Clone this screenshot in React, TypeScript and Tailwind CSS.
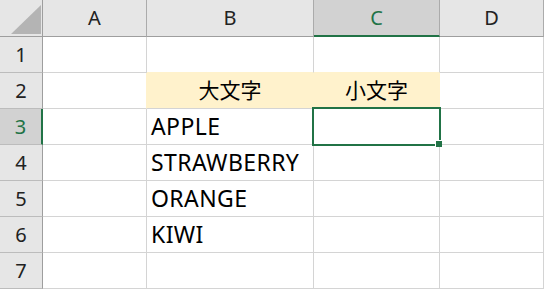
import React from 'react';

const cols = ['A', 'B', 'C', 'D'];

const values: Record<string, string> = {
  B2: '大文字',
  C2: '小文字',
  B3: 'APPLE',
  B4: 'STRAWBERRY',
  B5: 'ORANGE',
  B6: 'KIWI',
};

const font = { fontFamily: '"Noto Sans", "Noto Sans CJK JP", sans-serif' };

function Cell({ col, row }: { col: string; row: number }) {
  const key = `${col}${row}`;
  const value = values[key];
  const yellow = row === 2 && (col === 'B' || col === 'C');
  const selected = key === 'C3';

  // fill on B2:C2 hides its surrounding gridlines, like Excel does
  const rightYellow = yellow || key === 'A2';
  const bottomYellow = row === 1 && (col === 'B' || col === 'C');

  return (
    <div
      className={`relative flex items-center border-r border-b ${
        yellow ? 'bg-[#fff2cc] justify-center text-[21px]' : 'bg-white pl-[4px] text-[23px] tracking-[0.4px]'
      } ${rightYellow ? 'border-r-[#fff2cc]' : 'border-r-[#d4d4d4]'} ${
        bottomYellow ? 'border-b-[#fff2cc]' : 'border-b-[#d4d4d4]'
      } ${selected ? 'z-10' : ''} text-black`}
    >
      {value && <span className="leading-none">{value}</span>}
      {selected && (
        <>
          <div className="absolute left-[-2px] top-[-2px] w-[129px] h-[39px] border-2 border-[#217346] pointer-events-none" />
          <div className="absolute left-[121px] top-[31px] w-[7px] h-[7px] bg-[#217346] border-l border-t border-white" />
        </>
      )}
    </div>
  );
}

export default function App() {
  const rows = [1, 2, 3, 4, 5, 6, 7];
  return (
    <div
      className="w-[544px] h-[289px] overflow-hidden bg-white grid grid-cols-[43px_104px_167px_126px_104px] grid-rows-[37px_repeat(7,36px)]"
      style={font}
    >
      {/* corner */}
      <div className="relative bg-[#e6e6e6] border-r border-b border-[#9e9e9e]">
        <svg className="absolute left-[11px] top-[5px]" width="30" height="29" viewBox="0 0 30 29">
          <polygon points="0,29 30,29 30,0" fill="#b4b4b4" />
        </svg>
      </div>

      {cols.map((c) => (
        <div
          key={c}
          className={`flex items-center justify-center text-[20px] border-b border-r border-r-[#ababab] ${
            c === 'C'
              ? 'bg-[#d2d2d2] text-[#217346] border-b-2 border-b-[#217346]'
              : 'bg-[#e6e6e6] text-[#222] border-b-[#9e9e9e]'
          }`}
        >
          <span className="leading-none">{c}</span>
        </div>
      ))}

      {rows.map((r) => (
        <React.Fragment key={r}>
          <div
            className={`flex items-center justify-center text-[20px] border-b border-b-[#bcbcbc] border-r ${
              r === 3
                ? 'bg-[#d2d2d2] text-[#217346] border-r-2 border-r-[#217346]'
                : 'bg-[#e6e6e6] text-[#222] border-r-[#9e9e9e]'
            }`}
          >
            <span className="leading-none">{r}</span>
          </div>
          {cols.map((c) => (
            <Cell key={c} col={c} row={r} />
          ))}
        </React.Fragment>
      ))}
    </div>
  );
}
